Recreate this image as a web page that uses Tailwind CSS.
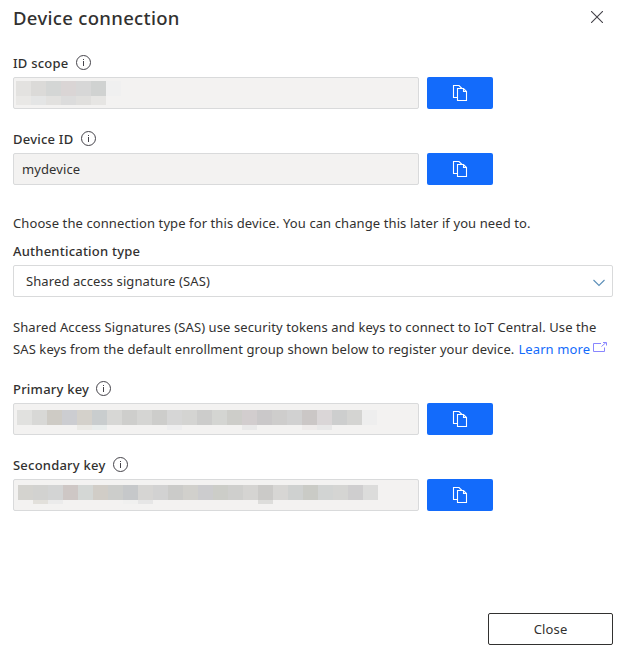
<!DOCTYPE html>
<html lang="en">
<head>
<meta charset="utf-8">
<title>Device connection</title>
<script src="https://cdn.jsdelivr.net/npm/@tailwindcss/browser@4"></script>
</head>
<body class="bg-white text-[#323130] font-['Noto_Sans','Open_Sans',sans-serif] text-[13px] leading-[20px] tracking-[0.098px]">
<svg class="hidden">
  <symbol id="info" viewBox="0 0 15 15"><circle cx="7.5" cy="7.5" r="7" fill="none" stroke="#45434a" stroke-width="1"/><path d="M7 4h1v1h-1zM7 6h1v5h-1z" fill="#45434a"/></symbol>
  <symbol id="copy" viewBox="0 0 16 18"><path d="M5 13.5H1.500V1.500H7l3 3M5.500 4.500H11.500L14.500 7.500V16.500H5.500ZM11.500 4.500V7.500H14.500" fill="none" stroke="#fff" stroke-width="1.100"/></symbol>
</svg>
<main class="w-[626px] h-[657px] pl-[13px] pr-[13px] flex flex-col">
  <header class="h-[53px] pt-[4px] flex justify-between">
    <h1 class="text-[18.500px] leading-[28px] font-medium tracking-[0.32px] whitespace-nowrap">Device connection</h1>
    <button class="w-[12px] h-[12px] mt-[7px] mr-[10px]" aria-label="Close panel"><svg viewBox="0 0 12 12" class="w-full h-full block"><path d="M0 0L12 12M12 0L0 12" stroke="#45434a" stroke-width="1.100"/></svg></button>
  </header>

  <section class="h-[76px]">
    <div class="h-[24px] flex items-start gap-[7px] font-medium tracking-[0.22px]"><span class="w-[56px] whitespace-nowrap">ID scope</span><svg class="w-[15px] h-[15px] mt-[2px]"><use href="#info"/></svg></div>
    <div class="flex gap-2">
      <div class="w-[406px] h-[32px] rounded-[2px] border border-[#d9dadb] bg-[#f3f2f1] pl-[2px] pt-[3px]" data-mosaic="0"></div>
      <button class="w-[66px] h-[32px] rounded-[2px] bg-[#136bfb] flex items-center justify-center" aria-label="Copy"><svg class="w-[16px] h-[18px]"><use href="#copy"/></svg></button>
    </div>
  </section>

  <section class="h-[84px]">
    <div class="h-[24px] flex items-start gap-[7px] font-medium tracking-[0.22px]"><span class="w-[61px] whitespace-nowrap">Device ID</span><svg class="w-[15px] h-[15px] mt-[2px]"><use href="#info"/></svg></div>
    <div class="flex gap-2">
      <div class="w-[406px] h-[32px] rounded-[2px] border border-[#d9dadb] bg-[#f3f2f1] pl-[8px] pt-[5px]">mydevice</div>
      <button class="w-[66px] h-[32px] rounded-[2px] bg-[#136bfb] flex items-center justify-center" aria-label="Copy"><svg class="w-[16px] h-[18px]"><use href="#copy"/></svg></button>
    </div>
  </section>

  <p class="h-[28px] whitespace-nowrap">Choose the connection type for this device. You can change this later if you need to.</p>
  <div class="h-[24px] font-medium tracking-[0.22px]">Authentication type</div>
  <div class="w-[600px] h-[32px] rounded-[2px] border border-[#d9dadb] flex justify-between pl-[12px] pr-[7px] pt-[5px]">
    <span>Shared access signature (SAS)</span>
    <svg class="w-[12px] h-[8px] mt-[8px]" viewBox="0 0 12 8"><path d="M.5 1L6 6.500L11.500 1" fill="none" stroke="#5c8fb8" stroke-width="1.100"/></svg>
  </div>

  <div class="h-[82px] pt-[19px] leading-[22px] whitespace-nowrap">
    <div>Shared Access Signatures (SAS) use security tokens and keys to connect to IoT Central. Use the</div>
    <div class="flex"><span>SAS keys from the default enrollment group shown below to register your device.</span><a class="flex text-[#136bfb] ml-[4px]"><span>Learn more</span><svg class="w-[15px] h-[12px] ml-[3px] mt-[3px]" viewBox="0 0 15 12"><path d="M8 2.500H.5V10.500H11.500V6.500M8.500 5.500L13 1.500M10 1.500H13.500V4.500" fill="none" stroke="#8986ff" stroke-width="1"/></svg></a></div>
  </div>

  <section class="h-[76px]">
    <div class="h-[24px] flex items-start gap-[7px] font-medium tracking-[0.22px]"><span class="w-[76px] whitespace-nowrap">Primary key</span><svg class="w-[15px] h-[15px] mt-[2px]"><use href="#info"/></svg></div>
    <div class="flex gap-2">
      <div class="w-[406px] h-[32px] rounded-[2px] border border-[#d9dadb] bg-[#f3f2f1] pl-[3px] pt-[6px]" data-mosaic="1"></div>
      <button class="w-[66px] h-[32px] rounded-[2px] bg-[#136bfb] flex items-center justify-center" aria-label="Copy"><svg class="w-[16px] h-[18px]"><use href="#copy"/></svg></button>
    </div>
  </section>

  <section class="h-[158px]">
    <div class="h-[24px] flex items-start gap-[7px] font-medium tracking-[0.22px]"><span class="w-[93px] whitespace-nowrap">Secondary key</span><svg class="w-[15px] h-[15px] mt-[2px]"><use href="#info"/></svg></div>
    <div class="flex gap-2">
      <div class="w-[406px] h-[32px] rounded-[2px] border border-[#d9dadb] bg-[#f3f2f1] pl-[4px] pt-[5px]" data-mosaic="2"></div>
      <button class="w-[66px] h-[32px] rounded-[2px] bg-[#136bfb] flex items-center justify-center" aria-label="Copy"><svg class="w-[16px] h-[18px]"><use href="#copy"/></svg></button>
    </div>
  </section>

  <footer class="flex justify-end">
    <button class="w-[125px] h-[32px] rounded-[2px] border border-[#323130] pb-[1px] tracking-[0.15px]">Close</button>
  </footer>
</main>
<script>
// Redacted values: rows of 15px wide cells, "-" leaves a cell empty.
const mosaics = [
  [[15, 'e3e2e0 dbdad8 d4d6d5 dad5d5 d7d7d7 d0d2d1 f0f0f0'], [9, 'e9e8e6 e4e5e5 e2e1df dcdcdc e0dfdd e6e5e3']],
  [[15, 'e1e1df d8d8d6 cecbc5 cccdd1 d4d1cb c9cdce d7d7d5 cececc d5d5d3 cdcdcb d6d6d6 d4d4d2 cccccb d4d5d2 cdcdc9 d2cdce cac8c9 cecdcc d1d1d1 cbc7c6 dad6d7 cdcece d4d4d2 eeeeee'], [5, '- - - - ebeae6 e9edec - - - - eeeeef - - - - e9e9e9 - - - eeebea e8e8e8']],
  [[15, 'd4d3cf d2d2d0 d3d4d4 cec7c5 d4d7d5 d1cdc7 cccdcb c6c8ca d6d5d3 d2d2d2 cbcbc9 d1d0cc ccccce cccdc8 cfcfcd d5d4d2 cbcac8 d7d6d4 cfd1d0 cacbc6 d2d4d3 d5d5d3 cfcecf dcdcdb'], [4, '- e2e0db ebebeb - - - - f0f0ef e6e6e6 - - - - - - - dddddb']]
];
document.querySelectorAll('[data-mosaic]').forEach(box => {
  mosaics[box.dataset.mosaic].forEach(([h, cells]) => {
    const row = document.createElement('div');
    row.className = 'flex';
    cells.split(' ').forEach(c => {
      const cell = document.createElement('i');
      cell.className = 'block w-[15px]';
      cell.style.height = h + 'px';
      if (c !== '-') cell.style.background = '#' + c;
      row.append(cell);
    });
    box.append(row);
  });
});
</script>
</body>
</html>
